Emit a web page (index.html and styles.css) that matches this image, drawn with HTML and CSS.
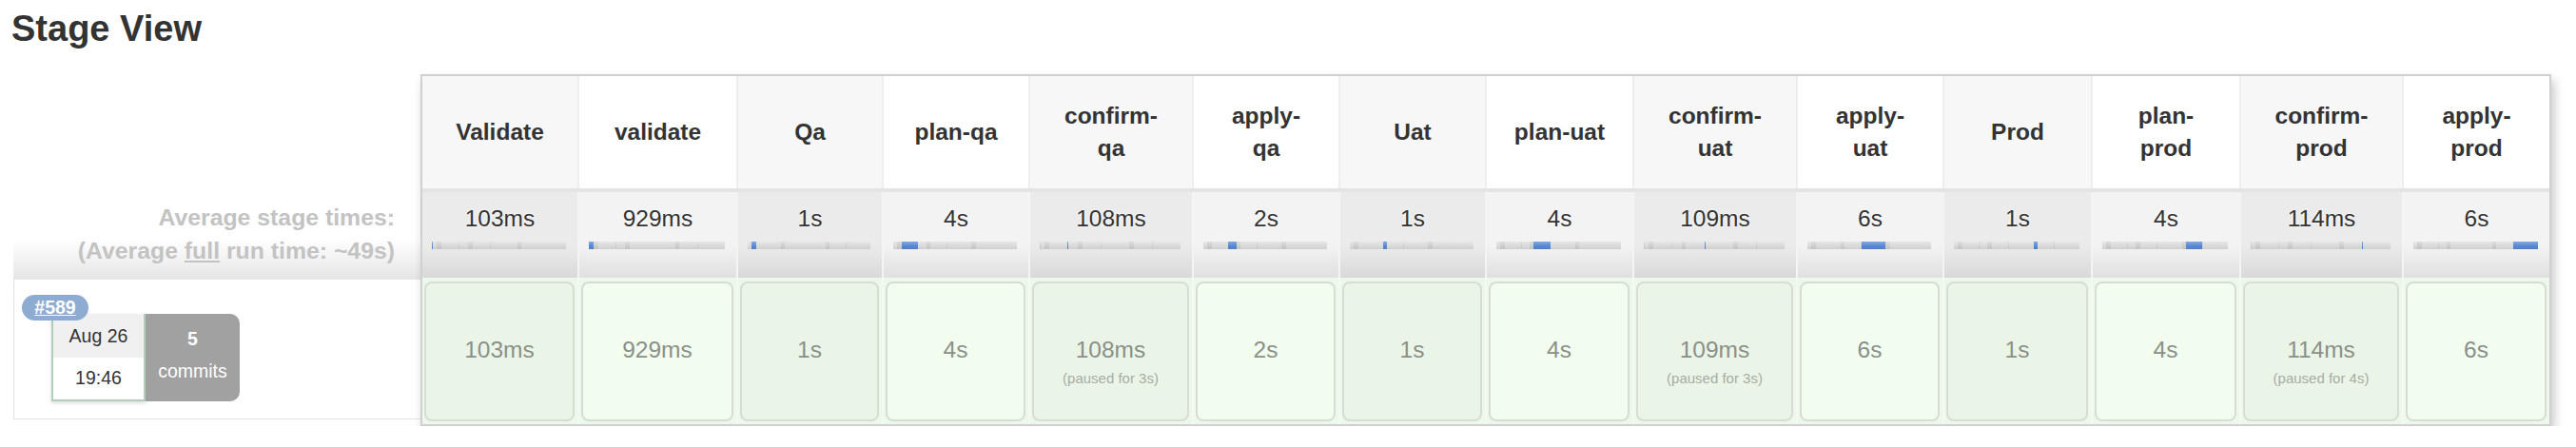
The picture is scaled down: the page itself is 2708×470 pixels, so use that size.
FILE: index.html
```html
<!DOCTYPE html>
<html lang="en">
<head>
<meta charset="utf-8">
<title>Stage View</title>
<link rel="stylesheet" href="styles.css">
</head>
<body>
<div class="page">
  <h2 class="title">Stage View</h2>
  <div class="view">
    <div class="side">
      <div class="side-head"></div>
      <div class="side-avg">
        <div>Average stage times:</div>
        <div>(Average <u>full</u> run time: ~49s)</div>
      </div>
      <div class="side-build">
        <div class="build-info">
          <span class="badge"><a class="badge-link">#589</a></span>
          <div class="date"><div class="d">Aug 26</div><div class="t">19:46</div></div>
          <div class="commits"><div class="n">5</div><div class="c">commits</div></div>
        </div>
      </div>
    </div>
    <div class="table-box">
      <div class="row head">
        <div class="cell"><span class="name">Validate</span></div>
        <div class="cell"><span class="name">validate</span></div>
        <div class="cell"><span class="name">Qa</span></div>
        <div class="cell"><span class="name">plan-qa</span></div>
        <div class="cell"><span class="name">confirm-qa</span></div>
        <div class="cell"><span class="name">apply-qa</span></div>
        <div class="cell"><span class="name">Uat</span></div>
        <div class="cell"><span class="name">plan-uat</span></div>
        <div class="cell"><span class="name">confirm-uat</span></div>
        <div class="cell"><span class="name">apply-uat</span></div>
        <div class="cell"><span class="name">Prod</span></div>
        <div class="cell"><span class="name">plan-prod</span></div>
        <div class="cell"><span class="name">confirm-prod</span></div>
        <div class="cell"><span class="name">apply-prod</span></div>
      </div>
      <div class="row avg">
        <div class="cell"><div class="t">103ms</div><div class="bar"><i class="s1 cur"></i><i class="s2"></i><i class="s3"></i><i class="s4"></i><i class="s5"></i><i class="s6"></i><i class="s7"></i><i class="s8"></i><i class="s9"></i><i class="s10"></i><i class="s11"></i><i class="s12"></i><i class="s13"></i><i class="s14"></i></div></div>
        <div class="cell"><div class="t">929ms</div><div class="bar"><i class="s1"></i><i class="s2 cur"></i><i class="s3"></i><i class="s4"></i><i class="s5"></i><i class="s6"></i><i class="s7"></i><i class="s8"></i><i class="s9"></i><i class="s10"></i><i class="s11"></i><i class="s12"></i><i class="s13"></i><i class="s14"></i></div></div>
        <div class="cell"><div class="t">1s</div><div class="bar"><i class="s1"></i><i class="s2"></i><i class="s3 cur"></i><i class="s4"></i><i class="s5"></i><i class="s6"></i><i class="s7"></i><i class="s8"></i><i class="s9"></i><i class="s10"></i><i class="s11"></i><i class="s12"></i><i class="s13"></i><i class="s14"></i></div></div>
        <div class="cell"><div class="t">4s</div><div class="bar"><i class="s1"></i><i class="s2"></i><i class="s3"></i><i class="s4 cur"></i><i class="s5"></i><i class="s6"></i><i class="s7"></i><i class="s8"></i><i class="s9"></i><i class="s10"></i><i class="s11"></i><i class="s12"></i><i class="s13"></i><i class="s14"></i></div></div>
        <div class="cell"><div class="t">108ms</div><div class="bar"><i class="s1"></i><i class="s2"></i><i class="s3"></i><i class="s4"></i><i class="s5 cur"></i><i class="s6"></i><i class="s7"></i><i class="s8"></i><i class="s9"></i><i class="s10"></i><i class="s11"></i><i class="s12"></i><i class="s13"></i><i class="s14"></i></div></div>
        <div class="cell"><div class="t">2s</div><div class="bar"><i class="s1"></i><i class="s2"></i><i class="s3"></i><i class="s4"></i><i class="s5"></i><i class="s6 cur"></i><i class="s7"></i><i class="s8"></i><i class="s9"></i><i class="s10"></i><i class="s11"></i><i class="s12"></i><i class="s13"></i><i class="s14"></i></div></div>
        <div class="cell"><div class="t">1s</div><div class="bar"><i class="s1"></i><i class="s2"></i><i class="s3"></i><i class="s4"></i><i class="s5"></i><i class="s6"></i><i class="s7 cur"></i><i class="s8"></i><i class="s9"></i><i class="s10"></i><i class="s11"></i><i class="s12"></i><i class="s13"></i><i class="s14"></i></div></div>
        <div class="cell"><div class="t">4s</div><div class="bar"><i class="s1"></i><i class="s2"></i><i class="s3"></i><i class="s4"></i><i class="s5"></i><i class="s6"></i><i class="s7"></i><i class="s8 cur"></i><i class="s9"></i><i class="s10"></i><i class="s11"></i><i class="s12"></i><i class="s13"></i><i class="s14"></i></div></div>
        <div class="cell"><div class="t">109ms</div><div class="bar"><i class="s1"></i><i class="s2"></i><i class="s3"></i><i class="s4"></i><i class="s5"></i><i class="s6"></i><i class="s7"></i><i class="s8"></i><i class="s9 cur"></i><i class="s10"></i><i class="s11"></i><i class="s12"></i><i class="s13"></i><i class="s14"></i></div></div>
        <div class="cell"><div class="t">6s</div><div class="bar"><i class="s1"></i><i class="s2"></i><i class="s3"></i><i class="s4"></i><i class="s5"></i><i class="s6"></i><i class="s7"></i><i class="s8"></i><i class="s9"></i><i class="s10 cur"></i><i class="s11"></i><i class="s12"></i><i class="s13"></i><i class="s14"></i></div></div>
        <div class="cell"><div class="t">1s</div><div class="bar"><i class="s1"></i><i class="s2"></i><i class="s3"></i><i class="s4"></i><i class="s5"></i><i class="s6"></i><i class="s7"></i><i class="s8"></i><i class="s9"></i><i class="s10"></i><i class="s11 cur"></i><i class="s12"></i><i class="s13"></i><i class="s14"></i></div></div>
        <div class="cell"><div class="t">4s</div><div class="bar"><i class="s1"></i><i class="s2"></i><i class="s3"></i><i class="s4"></i><i class="s5"></i><i class="s6"></i><i class="s7"></i><i class="s8"></i><i class="s9"></i><i class="s10"></i><i class="s11"></i><i class="s12 cur"></i><i class="s13"></i><i class="s14"></i></div></div>
        <div class="cell"><div class="t">114ms</div><div class="bar"><i class="s1"></i><i class="s2"></i><i class="s3"></i><i class="s4"></i><i class="s5"></i><i class="s6"></i><i class="s7"></i><i class="s8"></i><i class="s9"></i><i class="s10"></i><i class="s11"></i><i class="s12"></i><i class="s13 cur"></i><i class="s14"></i></div></div>
        <div class="cell"><div class="t">6s</div><div class="bar"><i class="s1"></i><i class="s2"></i><i class="s3"></i><i class="s4"></i><i class="s5"></i><i class="s6"></i><i class="s7"></i><i class="s8"></i><i class="s9"></i><i class="s10"></i><i class="s11"></i><i class="s12"></i><i class="s13"></i><i class="s14 cur"></i></div></div>
      </div>
      <div class="row build">
        <div class="cell"><div class="box"><div class="dur">103ms</div></div></div>
        <div class="cell"><div class="box"><div class="dur">929ms</div></div></div>
        <div class="cell"><div class="box"><div class="dur">1s</div></div></div>
        <div class="cell"><div class="box"><div class="dur">4s</div></div></div>
        <div class="cell"><div class="box"><div class="dur">108ms</div><div class="pause">(paused for 3s)</div></div></div>
        <div class="cell"><div class="box"><div class="dur">2s</div></div></div>
        <div class="cell"><div class="box"><div class="dur">1s</div></div></div>
        <div class="cell"><div class="box"><div class="dur">4s</div></div></div>
        <div class="cell"><div class="box"><div class="dur">109ms</div><div class="pause">(paused for 3s)</div></div></div>
        <div class="cell"><div class="box"><div class="dur">6s</div></div></div>
        <div class="cell"><div class="box"><div class="dur">1s</div></div></div>
        <div class="cell"><div class="box"><div class="dur">4s</div></div></div>
        <div class="cell"><div class="box"><div class="dur">114ms</div><div class="pause">(paused for 4s)</div></div></div>
        <div class="cell"><div class="box"><div class="dur">6s</div></div></div>
      </div>
    </div>
  </div>
</div>
</body>
</html>
```

FILE: styles.css
```css
html, body {
  margin: 0;
  padding: 0;
  background: #ffffff;
}

body {
  font-family: "Liberation Sans", Arial, Helvetica, sans-serif;
  color: #333333;
}

.page {
  padding: 8px 14px 0 14px;
}

.title {
  margin: 0 0 26px -2px;
  font-size: 38px;
  line-height: 44px;
  font-weight: bold;
  color: #333333;
}

.view {
  display: flex;
  align-items: flex-start;
}

/* ---------- left column ---------- */
.side {
  flex: none;
  width: 428px;
}

.side-head {
  height: 122px;
}

.side-avg {
  height: 93px;
  box-sizing: border-box;
  padding: 11px 27px 0 0;
  text-align: right;
  font-size: 24.8px;
  line-height: 35px;
  font-weight: bold;
  color: #c3c3c3;
  background: linear-gradient(#ffffff 0%, #ffffff 55%, #e6e6e6 100%);
}

.side-build {
  height: 148px;
  box-sizing: border-box;
  border: 1px solid #e4e4e4;
  border-right: none;
  padding: 36px 0 0 39px;
}

.build-info {
  position: relative;
  display: flex;
}

.badge {
  position: absolute;
  left: -31px;
  top: -20px;
  z-index: 2;
  width: 70px;
  height: 27px;
  border-radius: 14px;
  background: #8eabd1;
  text-align: center;
  font-size: 19.5px;
  line-height: 27px;
  font-weight: bold;
}

.badge-link {
  color: #ffffff;
  text-decoration: underline;
}

.date {
  width: 99px;
  box-sizing: border-box;
  border: 2px solid #b2cdb9;
  border-top: none;
  box-shadow: 0 2px 4px rgba(0, 0, 0, 0.14);
  text-align: center;
  font-size: 19.5px;
  color: #333333;
}

.date .d {
  height: 46px;
  line-height: 46px;
  background: #f0f0f0;
}

.date .t {
  height: 43px;
  line-height: 43px;
  background: #ffffff;
}

.commits {
  width: 99px;
  height: 92px;
  box-sizing: border-box;
  padding-top: 13px;
  border-radius: 0 10px 10px 0;
  background: #a1a1a1;
  color: #ffffff;
  text-align: center;
  font-size: 19.5px;
}

.commits .n {
  line-height: 26px;
  font-weight: bold;
}

.commits .c {
  margin-top: 7px;
  line-height: 28px;
}

/* ---------- stage table ---------- */
.table-box {
  flex: none;
  border: 2px solid #d0d0d0;
  background: #ffffff;
  box-shadow: 3px 6px 10px rgba(0, 0, 0, 0.22);
}

.row {
  display: grid;
  grid-template-columns: 163px 165px 151px 152px 170px 152px 152px 153px 170px 152px 154px 154px 169px 153px;
  column-gap: 2px;
}

/* header */
.head {
  height: 118px;
  background: #eeeeee;
}

.head .cell {
  display: flex;
  align-items: center;
  justify-content: center;
  text-align: center;
  font-size: 24.5px;
  line-height: 34px;
  font-weight: bold;
  color: #333333;
  background: #ffffff;
}

.head .cell:nth-child(odd) {
  background: #f7f7f7;
}

.name {
  max-width: 98px;
}

/* average row */
.avg {
  height: 94px;
  box-sizing: border-box;
  border-top: 4px solid #e4e4e4;
  background: #f4f4f4;
}

.avg .cell {
  padding-top: 13px;
  text-align: center;
  background: linear-gradient(#f3f3f3 0%, #f3f3f3 62%, #e0e0e0 100%);
}

.avg .cell:nth-child(odd) {
  background: linear-gradient(#ebebeb 0%, #ebebeb 62%, #d9d9d9 100%);
}

.avg .t {
  font-size: 24.5px;
  line-height: 30px;
  color: #333333;
  text-shadow: 0 0 3px #ffffff;
}

.bar {
  display: flex;
  height: 8px;
  margin: 9px 12px 0 10px;
  background: #d8d8d8;
}

.bar i {
  display: block;
  flex: 0 1 0;
  min-width: 0;
  background-color: #dadada;
  background-image: linear-gradient(rgba(255, 255, 255, 0.35), rgba(255, 255, 255, 0) 55%, rgba(0, 0, 0, 0.05));
}

.bar i:nth-child(odd) {
  background-color: #cdcdcd;
}

.bar i.cur {
  min-width: 1px;
  background-color: #5f8fd6;
  background-image: linear-gradient(#86aae3, #5a8ad2 55%, #4d7ec8);
}

.s1 { flex-grow: 0.103 !important; }
.s2 { flex-grow: 0.929 !important; }
.s3 { flex-grow: 1 !important; }
.s4 { flex-grow: 4 !important; }
.s5 { flex-grow: 0.108 !important; }
.s6 { flex-grow: 2 !important; }
.s7 { flex-grow: 1 !important; }
.s8 { flex-grow: 4 !important; }
.s9 { flex-grow: 0.109 !important; }
.s10 { flex-grow: 6 !important; }
.s11 { flex-grow: 1 !important; }
.s12 { flex-grow: 4 !important; }
.s13 { flex-grow: 0.114 !important; }
.s14 { flex-grow: 6 !important; }

/* build row */
.build {
  height: 154px;
  background: #f3faf0;
}

.build .cell {
  padding: 4px 3px 3px 2px;
  background: #eef7eb;
}

.box {
  height: 100%;
  box-sizing: border-box;
  padding-top: 55px;
  border: 2px solid #d6ddd3;
  border-radius: 8px;
  background: #f2fcef;
  text-align: center;
  color: #8a9089;
}

.build .cell:nth-child(odd) .box {
  background: #ebf5e7;
}

.dur {
  font-size: 24.5px;
  line-height: 30px;
}

.pause {
  margin-top: 7px;
  font-size: 15px;
  line-height: 16px;
  color: #a7aca6;
}
```
